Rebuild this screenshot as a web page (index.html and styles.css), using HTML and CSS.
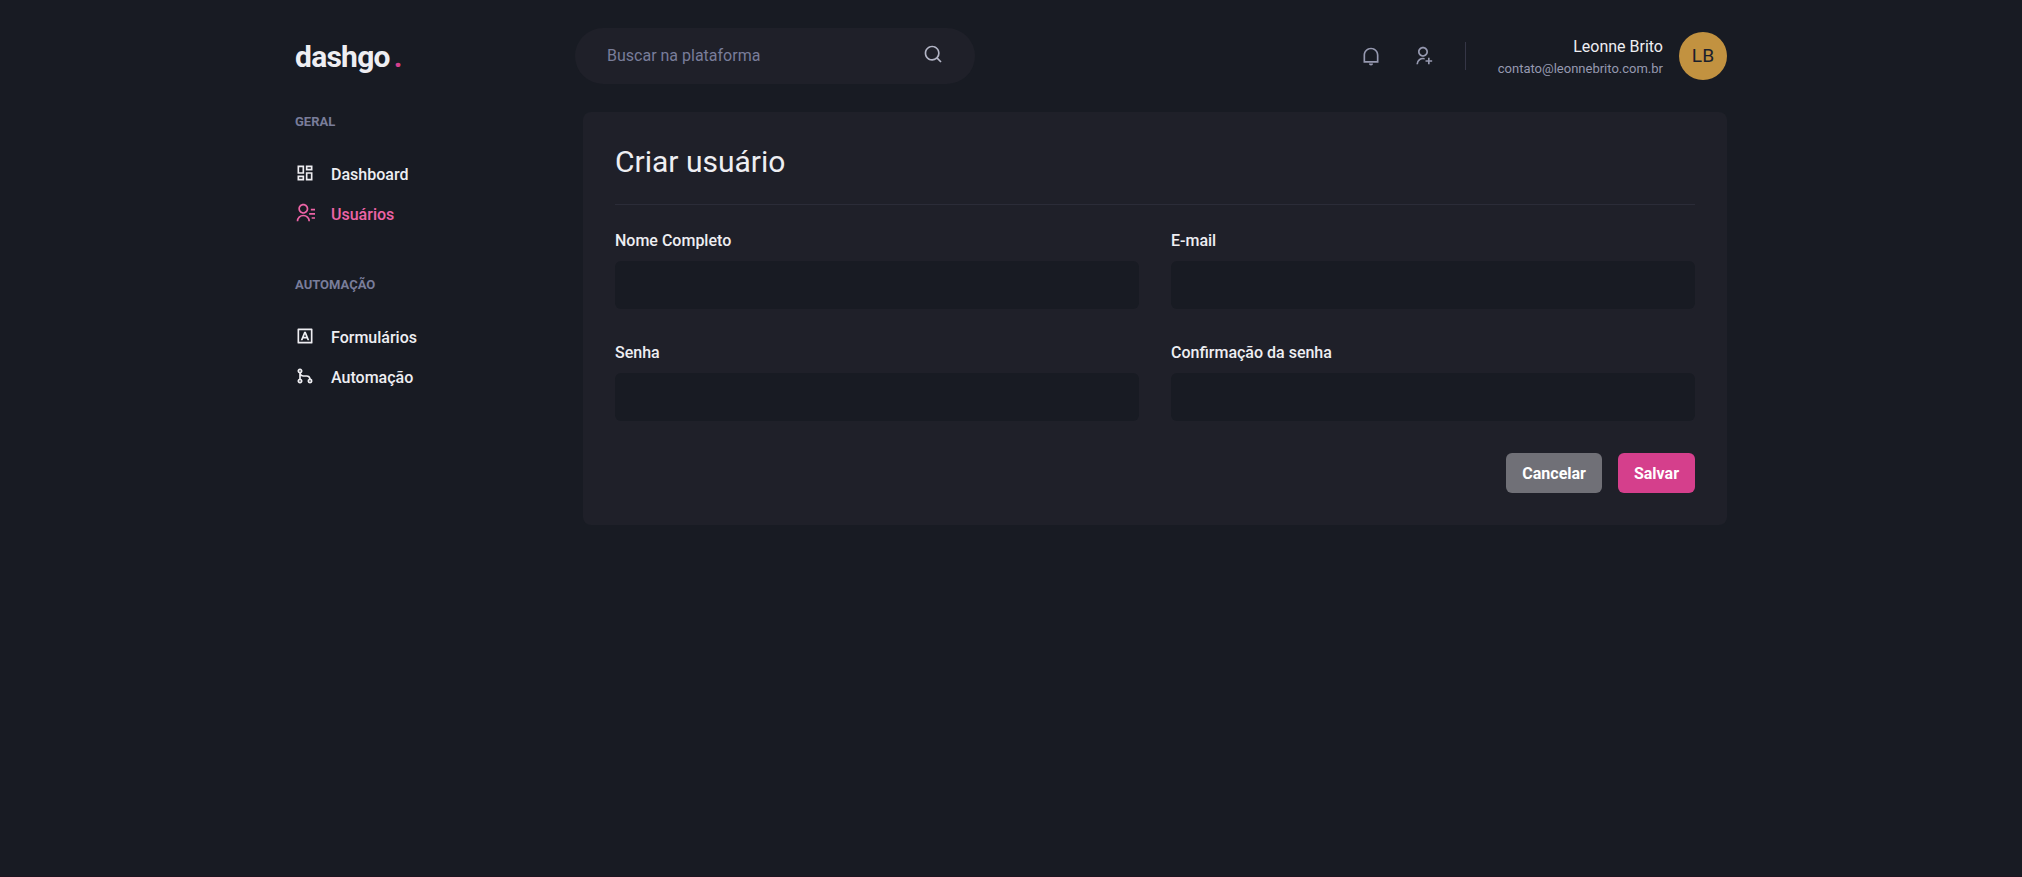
FILE: index.html
```html
<!DOCTYPE html>
<html lang="pt-BR">
<head>
<meta charset="utf-8">
<title>dashgo</title>
<link rel="stylesheet" href="styles.css">
</head>
<body>
<header class="header">
  <div class="logo">dashgo<span class="logo-dot">.</span></div>
  <label class="search">
    <input class="search-input" type="text" placeholder="Buscar na plataforma">
    <svg class="icon search-icon" viewBox="0 0 24 24"><path d="M18.031 16.617l4.283 4.282-1.415 1.415-4.282-4.283A8.96 8.96 0 0 1 11 20c-4.968 0-9-4.032-9-9s4.032-9 9-9 9 4.032 9 9a8.96 8.96 0 0 1-1.969 5.617zm-2.006-.742A6.977 6.977 0 0 0 18 11c0-3.868-3.133-7-7-7-3.868 0-7 3.132-7 7 0 3.867 3.132 7 7 7a6.977 6.977 0 0 0 4.875-1.975l.15-.15z"/></svg>
  </label>
  <div class="account">
    <div class="actions">
      <svg class="icon" viewBox="0 0 24 24"><path d="M21 20H3V11.031C3 6.043 7.03 2 12 2s9 4.043 9 9.031V20zM5 18h14v-6.969C19 7.148 15.866 4 12 4s-7 3.148-7 7.031V18zm4.5 3h5a2.5 2.5 0 1 1-5 0z"/></svg>
      <svg class="icon" viewBox="0 0 24 24"><path d="M14 14.252v2.09A6 6 0 0 0 6 22l-2-.001a8 8 0 0 1 10-7.748zM12 13c-3.315 0-6-2.685-6-6s2.685-6 6-6 6 2.685 6 6-2.685 6-6 6zm0-2c2.21 0 4-1.79 4-4s-1.79-4-4-4-4 1.79-4 4 1.79 4 4 4zm6 6v-3h2v3h3v2h-3v3h-2v-3h-3v-2h3z"/></svg>
    </div>
    <div class="profile">
      <div class="profile-text">
        <span class="profile-name">Leonne Brito</span>
        <span class="profile-email">contato@leonnebrito.com.br</span>
      </div>
      <div class="avatar">LB</div>
    </div>
  </div>
</header>
<div class="layout">
  <aside class="sidebar">
    <nav class="nav-section">
      <h2 class="nav-title">GERAL</h2>
      <a class="nav-link"><svg class="icon" viewBox="0 0 24 24"><path d="M13 21V11h8v10h-8zM3 13V3h8v10H3zm6-2V5H5v6h4zM3 21v-6h8v6H3zm2-2h4v-2H5v2zm10 0h4v-6h-4v6zM13 3h8v6h-8V3zm2 2v2h4V5h-4z"/></svg><span>Dashboard</span></a>
      <a class="nav-link active"><svg class="icon" viewBox="0 0 24 24"><path d="M19 7h5v2h-5V7zm-2 5h7v2h-7v-2zm3 5h4v2h-4v-2zM2 22a8 8 0 1 1 16 0h-2a6 6 0 1 0-12 0H2zm8-9c-3.315 0-6-2.685-6-6s2.685-6 6-6 6 2.685 6 6-2.685 6-6 6zm0-2c2.21 0 4-1.79 4-4s-1.79-4-4-4-4 1.79-4 4 1.79 4 4 4z"/></svg><span>Usuários</span></a>
    </nav>
    <nav class="nav-section">
      <h2 class="nav-title">AUTOMAÇÃO</h2>
      <a class="nav-link"><svg class="icon" viewBox="0 0 24 24"><path d="M5 5v14h14V5H5zM4 3h16a1 1 0 0 1 1 1v16a1 1 0 0 1-1 1H4a1 1 0 0 1-1-1V4a1 1 0 0 1 1-1zm5.869 12l-.82 2H6.833L11 7h2l4.167 10H14.95l-.82-2H9.87zm.82-2h2.622L12 9.8 10.689 13z"/></svg><span>Formulários</span></a>
      <a class="nav-link"><svg class="icon" viewBox="0 0 24 24"><path d="M7.105 8.79A3.001 3.001 0 0 0 10 11h4a5.001 5.001 0 0 1 4.927 4.146A3.001 3.001 0 0 1 18 21a3 3 0 0 1-1.105-5.79A3.001 3.001 0 0 0 14 13h-4a4.978 4.978 0 0 1-3-1v3.17a3.001 3.001 0 1 1-2 0V8.83a3.001 3.001 0 1 1 2.105-.04zM6 7a1 1 0 1 0 0-2 1 1 0 0 0 0 2zm0 12a1 1 0 1 0 0-2 1 1 0 0 0 0 2zm12 0a1 1 0 1 0 0-2 1 1 0 0 0 0 2z"/></svg><span>Automação</span></a>
    </nav>
  </aside>
  <main class="card">
    <h1 class="card-title">Criar usuário</h1>
    <form>
      <div class="fields">
        <label class="field"><span>Nome Completo</span><input class="field-input" type="text"></label>
        <label class="field"><span>E-mail</span><input class="field-input" type="email"></label>
        <label class="field"><span>Senha</span><input class="field-input" type="password"></label>
        <label class="field"><span>Confirmação da senha</span><input class="field-input" type="password"></label>
      </div>
      <div class="buttons">
        <button class="button" type="button">Cancelar</button>
        <button class="button primary" type="button">Salvar</button>
      </div>
    </form>
  </main>
</div>
</body>
</html>
```
FILE: styles.css
```css
* { box-sizing: border-box; }
body {
  display: flow-root;
  margin: 0;
  min-height: 100vh;
  background: #181b23;
  border-bottom: 1px solid #1e1420;
  color: #eeeef2;
  font: 400 16px/24px Roboto, sans-serif;
}
h1, h2 { margin: 0; }
.header, .layout {
  display: flex;
  width: 1480px;
  margin: 0 auto;
  padding: 0 24px;
}
.header { height: 80px; margin-top: 16px; align-items: center; }
.icon { width: 20px; height: 20px; fill: currentColor; flex: none; }
.logo {
  width: 256px;
  padding-top: 2px;
  font-size: 30px;
  font-weight: 700;
  line-height: 40px;
  letter-spacing: -0.75px;
}
.logo-dot { margin-left: 4px; color: #d53f8c; }
.search {
  display: flex;
  width: 400px;
  height: 56px;
  margin-left: 24px;
  padding: 16px 32px;
  border-radius: 28px;
  background: #1f2029;
  color: #b3b5c6;
}
.search-input {
  flex: 1;
  min-width: 0;
  margin-right: 16px;
  padding: 0;
  border: 0;
  outline: 0;
  background: none;
  color: #eeeef2;
  font: inherit;
}
.search-input::placeholder { color: #797d9a; opacity: 1; }
.account { display: flex; align-items: center; margin-left: auto; }
.actions {
  display: flex;
  gap: 32px;
  margin-right: 32px;
  padding: 4px 32px 4px 0;
  border-right: 1px solid #353646;
  color: #9699b0;
}
.profile { display: flex; align-items: center; }
.profile-text {
  display: flex;
  flex-direction: column;
  margin-right: 16px;
  padding-top: 1.5px;
  text-align: right;
}
.profile-email { color: #9699b0; font-size: 13px; line-height: 20px; }
.avatar {
  display: grid;
  place-items: center;
  width: 48px;
  height: 48px;
  border-radius: 50%;
  background: #c29240;
  color: #1a202c;
  font-size: 19.2px;
}
.layout { margin-top: 16px; }
.sidebar { display: flex; flex-direction: column; gap: 48px; width: 256px; margin-right: 32px; }
.nav-section { display: flex; flex-direction: column; gap: 16px; }
.nav-title {
  margin-bottom: 16px;
  color: #797d9a;
  font-size: 13px;
  font-weight: 700;
  line-height: 19px;
}
.nav-link { display: flex; gap: 16px; height: 24px; font-weight: 500; }
.active { color: #ed64a6; }
.card { flex: 1; padding: 32px; border-radius: 8px; background: #1f2029; }
.card-title {
  margin-bottom: 24px;
  padding-bottom: 24px;
  border-bottom: 1px solid #2b2c38;
  font-size: 30px;
  font-weight: 400;
  line-height: 36px;
}
.fields { display: grid; grid-template-columns: 1fr 1fr; gap: 32px; }
.field { display: flex; flex-direction: column; gap: 8px; font-weight: 500; }
.field-input {
  height: 48px;
  padding: 0 16px;
  border: 0;
  border-radius: 6px;
  background: #181b23;
  color: inherit;
  font: inherit;
}
.buttons { display: flex; justify-content: flex-end; gap: 16px; margin-top: 32px; }
.button {
  height: 40px;
  padding: 2px 16px 0;
  border: 0;
  border-radius: 6px;
  background: #707077;
  color: #fff;
  font: 700 16px/24px Roboto, sans-serif;
}
.primary { background: #d53f8c; }
```
